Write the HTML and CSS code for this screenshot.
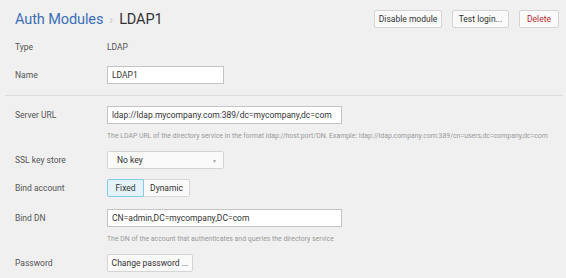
FILE: index.html
```html
<!DOCTYPE html>
<html>
<head>
<meta charset="utf-8">
<link rel="stylesheet" href="styles.css">
</head>
<body>
<div class="page">
  <header class="header">
    <h1 class="title"><span class="crumb">Auth Modules</span><span class="sep">›</span><span class="current">LDAP1</span></h1>
    <div class="actions">
      <button class="btn btn-disable">Disable module</button>
      <button class="btn btn-test">Test login...</button>
      <button class="btn btn-delete">Delete</button>
    </div>
  </header>

  <div class="row row-type">
    <div class="label">Type</div>
    <div class="value">LDAP</div>
  </div>
  <div class="row row-name">
    <div class="label">Name</div>
    <div class="input input-short">LDAP1</div>
  </div>

  <div class="divider"></div>

  <div class="row row-server">
    <div class="label">Server URL</div>
    <div class="input input-long">ldap://ldap.mycompany.com:389/dc=mycompany,dc=com</div>
  </div>
  <div class="help">The LDAP URL of the directory service in the format ldap://host:port/DN. Example: ldap://ldap.company.com:389/cn=users,dc=company,dc=com</div>

  <div class="row row-ssl">
    <div class="label">SSL key store</div>
    <div class="select"><span>No key</span><span class="caret">▾</span></div>
  </div>
  <div class="row row-bind">
    <div class="label">Bind account</div>
    <div class="segmented">
      <span class="seg seg-active">Fixed</span><span class="seg">Dynamic</span>
    </div>
  </div>
  <div class="row row-dn">
    <div class="label">Bind DN</div>
    <div class="input input-long">CN=admin,DC=mycompany,DC=com</div>
  </div>
  <div class="help">The DN of the account that authenticates and queries the directory service</div>

  <div class="row row-pass">
    <div class="label">Password</div>
    <button class="btn btn-pass">Change password ...</button>
  </div>
</div>
</body>
</html>
```
FILE: styles.css
```css
* { box-sizing: border-box; }
html, body {
  margin: 0;
  background: #f0f0f0;
  font-family: Roboto, "Liberation Sans", sans-serif;
  color: #333;
}
.page {
  display: flex;
  flex-direction: column;
  padding: 0 7px 0 15px;
  width: 566px;
}
.header {
  display: flex;
  justify-content: space-between;
  align-items: center;
  height: 38px;
}
.title {
  margin: 0;
  font-size: 14.5px;
  font-weight: 400;
  display: flex;
  align-items: center;
  letter-spacing: -0.1px;
}
.crumb { color: #3a6fb5; }
.sep { color: #c8c8c8; margin: 0 6px 0 6px; font-size: 13px; }
.current { color: #333; }
.actions {
  display: flex;
  gap: 10px;
}
.btn {
  font-family: Roboto, "Liberation Sans", sans-serif;
  font-size: 8.5px;
  color: #333;
  background: #fafafa;
  border: 1px solid #d4d4d4;
  border-radius: 2px;
  height: 18px;
  padding: 0;
  white-space: nowrap;
  display: flex;
  align-items: center;
  justify-content: center;
}
.btn-disable { width: 68px; }
.btn-test { width: 57px; }
.btn-delete { width: 40px; color: #b72a2f; }
.row {
  display: grid;
  grid-template-columns: 92px auto;
  align-items: center;
  height: 18px;
  font-size: 8.5px;
  justify-content: start;
}
.label { color: #555; }
.value { color: #555; }
.row-name { margin-top: 10px; }
.divider {
  height: 1px;
  background: #dcdcdc;
  margin: 11px -3px 10px -10px;
}
.input {
  background: #fff;
  border: 1px solid #c4c4c4;
  height: 18px;
  padding: 0 4px;
  display: flex;
  align-items: center;
  color: #333;
  font-size: 8.5px;
  white-space: nowrap;
  overflow: hidden;
}
.input-short { width: 117px; }
.input-long { width: 235px; }
.help {
  margin: 7px 0 0 92px;
  font-size: 6.9px;
  color: #999;
  height: 10px;
  line-height: 10px;
  white-space: nowrap;
}
.row-ssl { margin-top: 10px; }
.select {
  width: 117px;
  height: 18px;
  background: #fafafa;
  border: 1px solid #d4d4d4;
  border-radius: 2px;
  display: flex;
  align-items: center;
  justify-content: space-between;
  padding: 0 7px 0 9px;
  font-size: 8.5px;
  color: #333;
}
.caret { color: #aaa; font-size: 6px; }
.row-bind { margin-top: 10px; }
.segmented { display: flex; }
.seg {
  height: 18px;
  display: flex;
  align-items: center;
  justify-content: center;
  background: #fafafa;
  border: 1px solid #d8d8d8;
  font-size: 8.5px;
  color: #333;
}
.seg:first-child { width: 37px; border-radius: 2px 0 0 2px; }
.seg:last-child { width: 46px; border-left: none; border-radius: 0 2px 2px 0; }
.seg-active {
  background: #e4f3fa;
  border-color: #86c9e4;
}
.row-dn { margin-top: 12px; }
.row-pass { margin-top: 10px; }
.btn-pass { width: 86px; }
```
